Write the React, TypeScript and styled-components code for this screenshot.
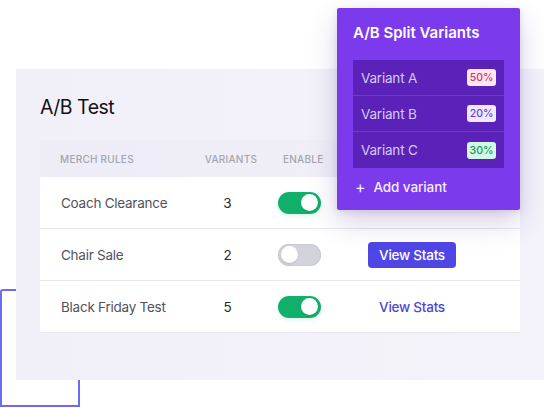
import React from "react";
import styled, { createGlobalStyle, css } from "styled-components";

const Global = createGlobalStyle`
  html, body { margin: 0; padding: 0; background: #ffffff; }
  body { font-family: Inter, "Noto Sans", "Liberation Sans", sans-serif; -webkit-font-smoothing: antialiased; }
  * { box-sizing: border-box; }
`;

const Stage = styled.div`
  position: relative;
  width: 544px;
  height: 408px;
  overflow: hidden;
  background: #ffffff;
  padding-top: 69px;
  padding-left: 16px;
`;

const Deco = styled.div`
  position: absolute;
  left: 0;
  top: 289px;
  width: 80px;
  height: 118px;
  border: 2px solid #6a6cf2;
  border-radius: 3px 0 0 0;
`;

const Panel = styled.section`
  position: relative;
  width: 528px;
  height: 311px;
  background: linear-gradient(90deg, #f1f0f9 0%, #f4f3fa 100%);
  padding: 26px 24px 0 24px;
`;

const Title = styled.h1`
  margin: 0;
  font-size: 19.5px;
  line-height: 24px;
  font-weight: 400;
  color: #111114;
  letter-spacing: -0.5px;
`;

const Table = styled.div`
  margin-top: 21px;
  width: 480px;
`;

const cols = css`
  display: grid;
  grid-template-columns: 156px 70px 74px 1fr;
  align-items: center;
`;

const HeadRow = styled.div`
  ${cols};
  height: 37px;
  background: rgba(40, 30, 90, 0.012);
`;

const HeadCell = styled.div<{ $align?: "left" | "center"; $pad?: number }>`
  font-size: 10px;
  font-weight: 500;
  letter-spacing: 0.25px;
  text-transform: uppercase;
  color: #a4a4ae;
  text-align: ${(p) => p.$align ?? "left"};
  padding-left: ${(p) => p.$pad ?? 0}px;
`;

const Row = styled.div`
  ${cols};
  height: 52px;
  background: #ffffff;
  border-bottom: 1px solid #e7e7ec;
`;

const NameCell = styled.div`
  padding-left: 21px;
  font-size: 13.5px;
  letter-spacing: -0.25px;
  color: #52525b;
`;

const NumCell = styled.div`
  text-align: center;
  padding-right: 7px;
  font-size: 13.5px;
  color: #27272a;
`;

const ToggleCell = styled.div`
  padding-left: 12px;
  display: flex;
`;

const Toggle = styled.div<{ $on: boolean }>`
  position: relative;
  width: 43px;
  height: 22px;
  border-radius: 11px;
  background: ${(p) => (p.$on ? "#10b06b" : "#d3d3dc")};
  box-shadow: ${(p) => (p.$on ? "0 2px 4px rgba(16,176,107,0.15)" : "inset 0 0 0 1px #cacad3")};
`;

const Knob = styled.span<{ $on: boolean }>`
  position: absolute;
  top: 2.5px;
  left: ${(p) => (p.$on ? "23px" : "3px")};
  width: 17px;
  height: 17px;
  border-radius: 50%;
  background: #ffffff;
  box-shadow: 0 1px 2px rgba(0, 0, 0, 0.12);
`;

const ActionCell = styled.div`
  padding-left: 28px;
  display: flex;
`;

const StatsButton = styled.button<{ $solid: boolean }>`
  width: 88px;
  height: 26px;
  border: none;
  border-radius: 4px;
  font-family: inherit;
  font-size: 13.5px;
  letter-spacing: -0.25px;
  font-weight: 500;
  padding: 0;
  cursor: pointer;
  background: ${(p) => (p.$solid ? "#4f46e5" : "transparent")};
  color: ${(p) => (p.$solid ? "#ffffff" : "#4f46d6")};
`;

const Popup = styled.div`
  position: absolute;
  top: 8px;
  left: 337px;
  width: 183px;
  height: 202px;
  background: #7b3aec;
  border-radius: 2px;
  box-shadow: 0 12px 28px rgba(70, 40, 140, 0.22), 0 2px 6px rgba(70, 40, 140, 0.12);
  padding: 16px 16px 0 16px;
  display: flex;
  flex-direction: column;
`;

const PopTitle = styled.h2`
  margin: 0;
  font-size: 15px;
  line-height: 18px;
  font-weight: 600;
  color: #ffffff;
`;

const VariantList = styled.ul`
  list-style: none;
  margin: 18px 0 0 0;
  padding: 0;
  background: #5a22b8;
`;

const VariantRow = styled.li`
  display: flex;
  align-items: center;
  justify-content: space-between;
  height: 36px;
  padding: 0 8px;
  border-bottom: 1px solid #7038dc;
  &:last-child { border-bottom: none; }
`;

const VariantName = styled.span`
  font-size: 13.5px;
  letter-spacing: -0.2px;
  color: #d7c9f7;
`;

const Badge = styled.span<{ $bg: string; $fg: string }>`
  width: 29px;
  height: 17px;
  border-radius: 3px;
  display: flex;
  align-items: center;
  justify-content: center;
  font-size: 10.5px;
  font-weight: 500;
  background: ${(p) => p.$bg};
  color: ${(p) => p.$fg};
`;

const AddRow = styled.div`
  display: flex;
  align-items: center;
  gap: 8px;
  height: 38px;
  padding-left: 2px;
  color: #f3edff;
  font-size: 13.5px;
  letter-spacing: -0.1px;
  font-weight: 500;
`;

const Plus = styled.span`
  font-size: 16px;
  font-weight: 400;
  line-height: 1;
`;

const rows = [
  { name: "Coach Clearance", n: 3, on: true, stats: "none" },
  { name: "Chair Sale", n: 2, on: false, stats: "solid" },
  { name: "Black Friday Test", n: 5, on: true, stats: "link" },
];

const variants = [
  { name: "Variant A", pct: "50%", bg: "#fde7f0", fg: "#d7336b" },
  { name: "Variant B", pct: "20%", bg: "#efe9fe", fg: "#6d3fd8" },
  { name: "Variant C", pct: "30%", bg: "#d3f8e6", fg: "#0f9a5e" },
];

export default function App() {
  return (
    <>
      <Global />
      <Stage>
        <Deco />
        <Panel>
          <Title>A/B Test</Title>
          <Table>
            <HeadRow>
              <HeadCell $pad={20}>Merch Rules</HeadCell>
              <HeadCell $align="center">Variants</HeadCell>
              <HeadCell $pad={17}>Enable</HeadCell>
              <HeadCell />
            </HeadRow>
            {rows.map((r) => (
              <Row key={r.name}>
                <NameCell>{r.name}</NameCell>
                <NumCell>{r.n}</NumCell>
                <ToggleCell>
                  <Toggle $on={r.on}>
                    <Knob $on={r.on} />
                  </Toggle>
                </ToggleCell>
                <ActionCell>
                  {r.stats !== "none" && (
                    <StatsButton $solid={r.stats === "solid"}>View Stats</StatsButton>
                  )}
                </ActionCell>
              </Row>
            ))}
          </Table>
        </Panel>
        <Popup>
          <PopTitle>A/B Split Variants</PopTitle>
          <VariantList>
            {variants.map((v) => (
              <VariantRow key={v.name}>
                <VariantName>{v.name}</VariantName>
                <Badge $bg={v.bg} $fg={v.fg}>{v.pct}</Badge>
              </VariantRow>
            ))}
          </VariantList>
          <AddRow>
            <Plus>+</Plus>
            Add variant
          </AddRow>
        </Popup>
      </Stage>
    </>
  );
}
